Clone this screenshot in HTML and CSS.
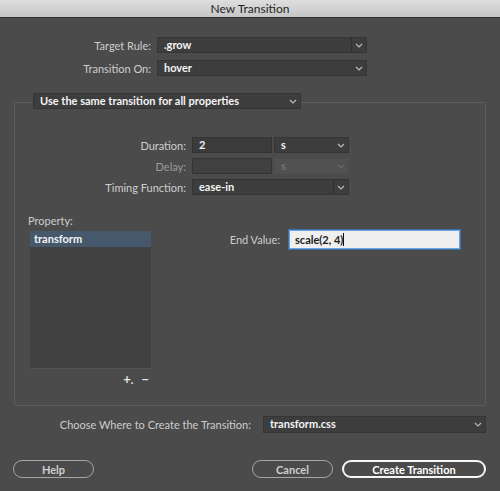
FILE: index.html
```html
<!DOCTYPE html>
<html lang="en">
<head>
  <meta charset="UTF-8" />
  <title>New Transition</title>
  <link rel="stylesheet" href="styles.css">
</head>
<body>
  <div class="dialog">
    <div class="titlebar">New Transition</div>

    <div class="top-form">
      <div class="row">
        <label class="lbl">Target Rule:</label>
        <div class="select split wide">
          <span class="val">.grow</span>
          <span class="btn"><svg width="8" height="5" viewBox="0 0 8 5"><path d="M1 1l3 3 3-3" fill="none" stroke="#bbb" stroke-width="1.2"/></svg></span>
        </div>
      </div>
      <div class="row">
        <label class="lbl">Transition On:</label>
        <div class="select wide">
          <span class="val">hover</span>
          <span class="btn"><svg width="8" height="5" viewBox="0 0 8 5"><path d="M1 1l3 3 3-3" fill="none" stroke="#bbb" stroke-width="1.2"/></svg></span>
        </div>
      </div>
    </div>

    <div class="group">
      <div class="select group-head">
        <span class="val">Use the same transition for all properties</span>
        <span class="btn"><svg width="8" height="5" viewBox="0 0 8 5"><path d="M1 1l3 3 3-3" fill="none" stroke="#bbb" stroke-width="1.2"/></svg></span>
      </div>

      <div class="timing">
        <div class="row">
          <label class="lbl">Duration:</label>
          <div class="field">2</div>
          <div class="select unit">
            <span class="val">s</span>
            <span class="btn"><svg width="8" height="5" viewBox="0 0 8 5"><path d="M1 1l3 3 3-3" fill="none" stroke="#bbb" stroke-width="1.2"/></svg></span>
          </div>
        </div>
        <div class="row disabled">
          <label class="lbl">Delay:</label>
          <div class="field"></div>
          <div class="select unit">
            <span class="val">s</span>
            <span class="btn"><svg width="8" height="5" viewBox="0 0 8 5"><path d="M1 1l3 3 3-3" fill="none" stroke="#666" stroke-width="1.2"/></svg></span>
          </div>
        </div>
        <div class="row">
          <label class="lbl">Timing Function:</label>
          <div class="select split timing-fn">
            <span class="val">ease-in</span>
            <span class="btn"><svg width="8" height="5" viewBox="0 0 8 5"><path d="M1 1l3 3 3-3" fill="none" stroke="#bbb" stroke-width="1.2"/></svg></span>
          </div>
        </div>
      </div>

      <div class="props">
        <div class="prop-col">
          <div class="prop-label">Property:</div>
          <ul class="prop-list">
            <li class="selected">transform</li>
          </ul>
          <div class="list-tools">
            <span class="plus">+<i>.</i></span>
            <span class="minus">&minus;</span>
          </div>
        </div>
        <div class="end-value">
          <label class="lbl">End Value:</label>
          <div class="text-input">scale(2, 4)<span class="caret"></span></div>
        </div>
      </div>
    </div>

    <div class="row choose">
      <label class="lbl">Choose Where to Create the Transition:</label>
      <div class="select file">
        <span class="val">transform.css</span>
        <span class="btn"><svg width="8" height="5" viewBox="0 0 8 5"><path d="M1 1l3 3 3-3" fill="none" stroke="#bbb" stroke-width="1.2"/></svg></span>
      </div>
    </div>

    <div class="buttons">
      <button class="pill">Help</button>
      <div class="right">
        <button class="pill">Cancel</button>
        <button class="pill primary">Create Transition</button>
      </div>
    </div>
  </div>
</body>
</html>
```

FILE: styles.css
```css
body {
  margin: 0;
  background: #4b4b4b;
  font-family: 'Lato', 'Open Sans', sans-serif;
  font-size: 11px;
  color: #d2d2d2;
}

.dialog {
  width: 500px;
  height: 491px;
  display: flex;
  flex-direction: column;
}

.titlebar {
  height: 17px;
  line-height: 18px;
  text-align: center;
  font-size: 12px;
  color: #1e1e1e;
  background: linear-gradient(#dedede, #c6c6c6);
  border-bottom: 1px solid #2e2e2e;
}

.row {
  display: flex;
  align-items: center;
  height: 16px;
}

.lbl {
  text-align: right;
  color: #cdcdcd;
  white-space: nowrap;
}

/* select boxes */
.select {
  display: flex;
  align-items: stretch;
  box-sizing: border-box;
  height: 16px;
  background: #3d3d3d;
  border: 1px solid #353535;
  color: #f4f4f4;
  font-weight: bold;
}

.select .val {
  flex: 1;
  padding-left: 6px;
  line-height: 14px;
  white-space: nowrap;
}

.select .btn {
  width: 14px;
  display: flex;
  align-items: center;
  justify-content: center;
}

.select.split .btn {
  border-left: 1px solid #2f2f2f;
}

.top-form {
  display: flex;
  flex-direction: column;
  gap: 7px;
  margin-top: 19px;
}

.top-form .lbl {
  width: 151px;
  margin-right: 6px;
}

.top-form .select {
  width: 210px;
}

/* transition group */
.group {
  margin: 26px 14px 0;
  height: 304px;
  box-sizing: border-box;
  border: 1px solid #5c5c5c;
  border-radius: 2px;
  display: flex;
  flex-direction: column;
}

.group-head {
  width: 268px;
  height: 16px;
  margin: -10px 0 0 18px;
}

.timing {
  display: flex;
  flex-direction: column;
  gap: 5px;
  margin-top: 28px;
}

.timing .row {
  height: 16px;
}

.timing .lbl {
  width: 171px;
  margin-right: 6px;
}

.field {
  box-sizing: border-box;
  width: 80px;
  height: 16px;
  background: #3b3b3b;
  border: 1px solid #333;
  color: #f4f4f4;
  font-weight: bold;
  padding-left: 6px;
  line-height: 14px;
  margin-right: 2px;
}

.select.unit {
  width: 75px;
}

.select.timing-fn {
  width: 157px;
}

.row.disabled .lbl {
  color: #9c9c9c;
}

.row.disabled .field {
  background: #404040;
}

.row.disabled .select {
  background: #515151;
  border-color: #4e4e4e;
  color: #747474;
}

.props {
  display: flex;
  margin-top: 20px;
  padding-left: 13px;
}

.prop-label {
  color: #cdcdcd;
  height: 12px;
  line-height: 12px;
}

.prop-list {
  list-style: none;
  margin: 4px 0 0 2px;
  padding: 0;
  width: 121px;
  height: 137px;
  background: #414141;
  border-bottom: 1px solid #555;
}

.prop-list li {
  height: 16px;
  line-height: 16px;
  padding-left: 4px;
  color: #f4f4f4;
  font-weight: bold;
}

.prop-list li.selected {
  background: #46586b;
}

.list-tools {
  display: flex;
  justify-content: flex-end;
  gap: 8px;
  margin-top: 3px;
  padding-right: 2px;
  color: #e6e6e6;
  font-weight: bold;
  font-size: 13px;
  line-height: 14px;
}

.list-tools .plus i {
  font-style: normal;
  font-size: 11px;
}

.end-value {
  display: flex;
  align-items: center;
  height: 19px;
  margin-top: 15px;
}

.end-value .lbl {
  width: 129px;
  margin-right: 9px;
}

.text-input {
  box-sizing: border-box;
  width: 171px;
  height: 19px;
  background: #efefef;
  border: 1px solid #6fa3dc;
  box-shadow: 0 0 0 1px #3c6fa8;
  color: #1c1c1c;
  font-weight: bold;
  padding-left: 5px;
  line-height: 17px;
  display: flex;
  align-items: center;
}

.caret {
  width: 1px;
  height: 13px;
  background: #111;
}

/* bottom */
.row.choose {
  margin-top: 10px;
  height: 17px;
}

.choose .lbl {
  width: 251px;
  margin-right: 12px;
}

.select.file {
  width: 223px;
  height: 17px;
}

.buttons {
  display: flex;
  justify-content: space-between;
  margin: 27px 14px 0 13px;
}

.buttons .right {
  display: flex;
  gap: 9px;
}

.pill {
  box-sizing: border-box;
  width: 81px;
  height: 18px;
  border: 1px solid #a6a6a6;
  border-radius: 9px;
  background: transparent;
  color: #cfcfcf;
  font-family: inherit;
  font-size: 11px;
  font-weight: bold;
  padding: 0;
}

.pill.primary {
  width: 144px;
  border: 2px solid #f6f6f6;
  color: #fff;
}
```
